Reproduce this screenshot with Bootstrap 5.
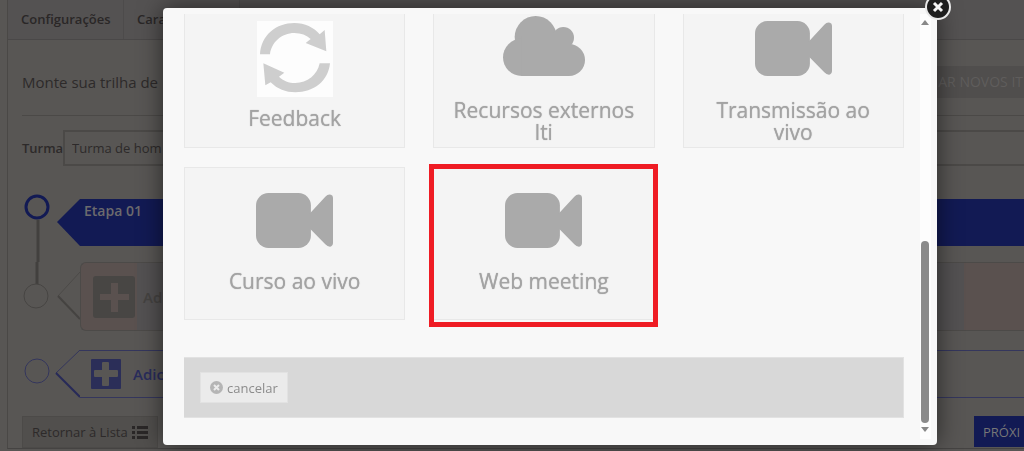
<!DOCTYPE html>
<html lang="pt-BR">
<head>
<meta charset="utf-8">
<meta name="viewport" content="width=device-width, initial-scale=1">
<title>Trilha de aprendizagem</title>
<link href="https://cdn.jsdelivr.net/npm/bootstrap@5.3.0/dist/css/bootstrap.min.css" rel="stylesheet">
<style>
  body { font: 13px/20px "Open Sans", sans-serif; background: #585654; color: #2d2a2a; overflow: hidden; }
  .page { margin-left: 7px; border-left: 1px solid #4a4846; border-bottom: 1px solid #454342; }
  .tabs { background: #545252; border-bottom: 1px solid #4a4848; height: 40px; }
  .tabs a { width: 116px; padding: 0 13px; line-height: 39px; color: #2a2727; font-weight: 600; text-decoration: none; border-right: 1px solid #4d4b4b; }
  .intro { height: 76px; margin-left: 14px; border-bottom: 1px solid #4b4947; font-size: 15px; }
  .new-items { height: 32px; padding: 0 1px 0 24px; border: 0; background: #504e4d; color: #5f5d5c; font-size: 14px; white-space: nowrap; }
  .class-row { margin: 14px 0 0 14px; }
  .class-row label { width: 41px; font-weight: 600; }
  .class-row input { height: 36px; padding: 0 7px; border: 2px solid #4b4947; border-right: 0; background: transparent; color: #2d2a2a; min-width: 0; }
  .steps { margin: 33px 0 0 14px; }
  .marker { width: 30px; flex: none; overflow: visible; }
  .tip { width: 28px; flex: none; }
  .bar-main { height: 47px; background: #121a54; color: #6c6a6d; font-size: 14px; font-weight: 600; padding-top: 2px; }
  .bar-add { height: 69px; border: 1px solid #4c4a48; border-right: 0; color: #454341; font-weight: 600; font-size: 15px;
    background: linear-gradient(90deg, #5a514f 0 56px, #535152 56px calc(100% - 60px), #5a514f calc(100% - 60px)); }
  .bar-new { height: 48px; margin-top: 19px; padding-left: 11px; border: solid #34365d; border-width: 1px 0; color: #292c5c; font-weight: 600; font-size: 15px; }
  .new-tip { margin-top: 19px; }
  .bottom-row { margin-top: 18px; }
  .btn-back { height: 32px; padding: 0 9px; border: 1px solid #4c4a48; background: #514f4d; color: #2d2a2a; }
  .btn-next { width: 50px; height: 31px; padding: 0 0 0 9px; border: 0; background: #121a54; color: #777; text-align: left; white-space: nowrap; }
  .overlay { padding: 8px 87px 6px 163px; }
  .dialog { background: #f8f8f8; border-radius: 4px; padding: 6px 6px 6px 21px; box-shadow: 0 0 24px rgba(0,0,0,.55); }
  .close-btn { position: absolute; top: -15px; right: -15px; width: 28px; height: 28px; padding: 0; border: 0; background: none; }
  .tiles { display: grid; grid-template-columns: repeat(3, minmax(0, 1fr)); gap: 19px 28px; }
  .tile { position: relative; display: flex; flex-direction: column; align-items: center; background: #f4f4f4; border: 1px solid #e8e8e8;
    color: #a3a3a3; font: 21px/22px "Open Sans", sans-serif; text-shadow: 0 0 1px #a3a3a3; padding: 0 16px; height: 153px; }
  .tile.cut { border-top: 0; height: 134px; }
  .pic { height: 80px; margin-bottom: 22px; }
  .cut .pic { height: 62px; margin-bottom: 23px; }
  .cut .pic-tall { height: 83px; margin-bottom: 10px; }
  .chosen::after { content: ""; position: absolute; inset: -4px -4px -8px -5px; border: 5px solid #ef1c24; }
  .actions { margin-top: 37px; margin-bottom: 21px; height: 61px; padding: 0 16px; background: #d8d8d8; border: 1px solid #e2e2e2; border-left: 0; }
  .btn-cancel { height: 31px; padding: 0 9px; background: #ebebeb; border: 1px solid #e2e2e2; color: #8c8c8c; }
  .scrollbar { width: 12px; margin-left: 16px; background: #fdfdfd; padding: 6px 0 7px; }
  .thumb { width: 8px; height: 182px; border-radius: 4px; background: #8a8a8a; }
</style>
</head>
<body>
<svg class="d-none" aria-hidden="true">
  <symbol id="camera" viewBox="0 0 230 164"><rect width="164" height="164" rx="37"/><path d="M160 62L207 11Q215 2 224 5Q230 7 230 14V150Q230 157 224 160Q215 162 207 153L160 105Z"/></symbol>
  <symbol id="plus" viewBox="0 0 30 30"><path fill-rule="evenodd" d="M1 0H29Q30 0 30 1V29Q30 30 29 30H1Q0 30 0 29V1Q0 0 1 0ZM12 3Q11 3 11 4V11H4Q3 11 3 12V17Q3 18 4 18H11V26Q11 27 12 27H17Q18 27 18 26V18H26Q27 18 27 17V12Q27 11 26 11H18V4Q18 3 17 3Z"/></symbol>
  <symbol id="plus-soft" viewBox="0 0 42 42"><path fill-rule="evenodd" d="M3 0H39Q42 0 42 3V39Q42 42 39 42H3Q0 42 0 39V3Q0 0 3 0ZM18 7V18H7V24H18V36H25V24H36V18H25V7Z"/></symbol>
</svg>

<main class="page">
  <nav class="tabs d-flex"><a href="#">Configurações</a><a href="#">Cara</a></nav>
  <div class="intro d-flex align-items-center justify-content-between pt-2"><span class="text-nowrap">Monte sua trilha de</span><button class="new-items" type="button">AR NOVOS IT</button></div>
  <div class="class-row d-flex align-items-center"><label for="turma">Turma</label><input id="turma" class="flex-fill" type="text" value="Turma de hom"></div>

  <section class="steps">
    <div class="d-flex">
      <svg class="marker" height="63" viewBox="0 0 30 63"><path d="M16 21V63" stroke="#42403e" stroke-width="3"/><circle cx="15" cy="8" r="11" fill="none" stroke="#121a54" stroke-width="3"/></svg>
      <svg class="tip ms-1" height="47" viewBox="0 0 28 47"><path d="M1 23L24 0H28V47H24Z" fill="#121a54"/></svg>
      <div class="bar-main flex-fill">Etapa 01</div>
    </div>
    <div class="d-flex">
      <svg class="marker" height="69" viewBox="0 0 30 69"><path d="M15 0V22" stroke="#42403e" stroke-width="3"/><circle cx="14" cy="34" r="12" fill="none" stroke="#474543" stroke-width="1"/></svg>
      <svg class="tip" height="69" viewBox="0 0 28 69"><path d="M28 10L6 34" stroke="#4c4a48"/><path d="M6 34L28 57" stroke="#454341" stroke-width="2"/></svg>
      <div class="bar-add flex-fill d-flex align-items-center rounded-start"><svg class="ms-2 me-2" width="46" height="42" fill="#484644"><use href="#plus-soft" x="4" width="42" height="42"/></svg>Adi</div>
    </div>
    <div class="d-flex">
      <svg class="marker new-tip" height="48" viewBox="0 0 30 48"><circle cx="15" cy="21" r="12" fill="none" stroke="#34365d" stroke-width="1"/></svg>
      <svg class="tip new-tip" height="48" viewBox="0 0 28 48"><path d="M28 0L4 23" stroke="#34365d"/><path d="M4 23L28 47" stroke="#272a58" stroke-width="2"/></svg>
      <div class="bar-new flex-fill d-flex align-items-center"><svg width="30" height="30" fill="#2b2e58"><use href="#plus"/></svg><span class="ms-2 ps-1">Adic</span></div>
    </div>
    <div class="bottom-row d-flex justify-content-between">
      <button class="btn-back d-flex align-items-center gap-1" type="button">Retornar à Lista
        <svg width="16" height="13" viewBox="0 0 16 13" fill="#2a2727"><path d="M0 0H3V3H0ZM5 0H16V3H5ZM0 5H3V8H0ZM5 5H16V8H5ZM0 10H3V13H0ZM5 10H16V13H5Z"/></svg></button>
      <button class="btn-next" type="button">PRÓXI</button>
    </div>
  </section>
</main>

<div class="overlay position-fixed top-0 start-0 w-100">
  <div class="dialog position-relative d-flex" role="dialog" aria-label="Adicionar item">
    <div class="flex-fill">
      <div class="tiles">
        <button class="tile cut" type="button"><span class="pic pic-tall d-flex align-items-end">
          <svg width="76" height="76" viewBox="0 0 228 228"><path fill="#fdfdfd" d="M0 0H228V228H0Z"/><path fill="#cecece" d="M9 100C12 42 58 6 112 6C144 6 170 19 188 40L203 27L208 91L146 66L161 54C149 42 132 36 112 36C74 36 43 64 39 100ZM219 127C214 180 170 214 115 214C86 214 61 204 41 184L25 193L19 127L82 155L66 167C79 179 95 186 115 186C151 186 181 162 188 127Z"/></svg></span><span>Feedback</span></button>
        <button class="tile cut" type="button"><span class="pic d-flex align-items-end">
          <svg width="82" height="60" viewBox="0 0 246 180" fill="#aaa"><circle cx="98" cy="63" r="63"/><circle cx="181" cy="65" r="32"/><circle cx="56" cy="124" r="56"/><circle cx="198" cy="132" r="48"/><path d="M56 60H150L198 84V180H56Z"/></svg></span><span>Recursos externos lti</span></button>
        <button class="tile cut" type="button"><span class="pic d-flex align-items-end"><svg width="77" height="55" fill="#aaa"><use href="#camera"/></svg></span><span>Transmissão ao vivo</span></button>
        <button class="tile" type="button"><span class="pic d-flex align-items-end"><svg width="77" height="55" fill="#aaa"><use href="#camera"/></svg></span><span>Curso ao vivo</span></button>
        <button class="tile chosen" type="button"><span class="pic d-flex align-items-end"><svg width="77" height="55" fill="#aaa"><use href="#camera"/></svg></span><span>Web meeting</span></button>
      </div>
      <div class="actions d-flex align-items-center"><button class="btn-cancel d-flex align-items-center" type="button">
        <svg width="13" height="13" viewBox="0 0 13 13"><circle cx="6.5" cy="6.5" r="6.5" fill="#b5b5b5"/><path d="M4 4L9 9M9 4L4 9" stroke="#ebebeb" stroke-width="2"/></svg><span class="ps-1">cancelar</span></button></div>
    </div>
    <div class="scrollbar d-flex flex-column align-items-center">
      <svg width="8" height="5" viewBox="0 0 8 5"><path d="M0 5L4 0L8 5Z" fill="#888"/></svg>
      <div class="thumb mt-auto mb-1"></div>
      <svg width="8" height="5" viewBox="0 0 8 5"><path d="M0 0L4 5L8 0Z" fill="#888"/></svg>
    </div>
    <button class="close-btn" type="button" aria-label="Fechar"><svg width="28" height="28" viewBox="0 0 28 28"><circle cx="14" cy="14" r="12" fill="#1d1d1d" stroke="#e8e8e8" stroke-width="2"/><path d="M10 10L18 18M18 10L10 18" stroke="#f4f4f4" stroke-width="3"/></svg></button>
  </div>
</div>
</body>
</html>
